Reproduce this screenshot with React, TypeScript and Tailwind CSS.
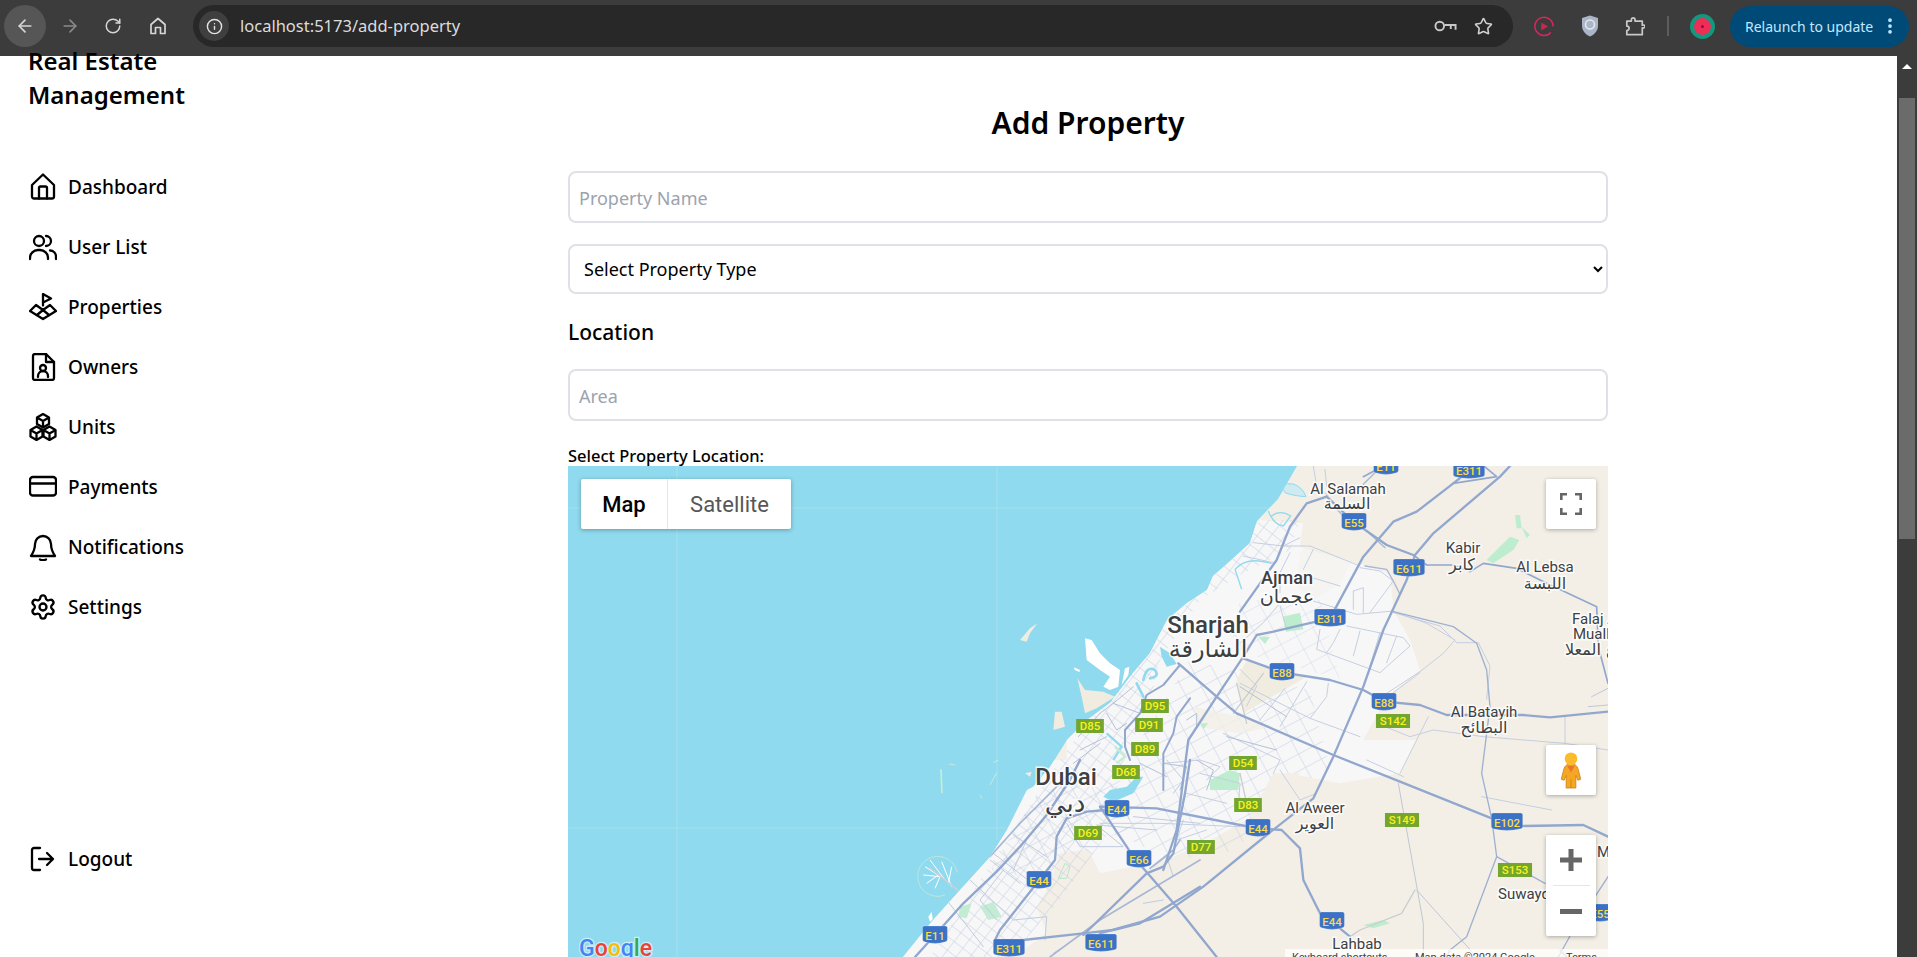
import { ArrowLeft, ArrowRight, RotateCw, Info, Star, Settings, EllipsisVertical } from "lucide-react";

const AR = "font-['DejaVu_Sans',sans-serif]";

function Z({ x, y, children }: { x: number; y: number; children: React.ReactNode }) {
  return <g transform={`translate(${x} ${y}) scale(0.33333)`}>{children}</g>;
}

function Roads({ items, c, w }: { items: string[]; c: string; w: number }) {
  return (
    <g fill="none" stroke={c} strokeWidth={w} strokeLinejoin="round" strokeLinecap="round">
      {items.map((d, i) => (
        <path key={i} d={d} />
      ))}
    </g>
  );
}

function Shield({ x, y, t }: { x: number; y: number; t: string }) {
  const w = t.length * 6.6 + 5;
  return (
    <g>
      <path
        d={`M${x - w / 2} ${y - 7.5} q0 -1.5 2 -1.5 h${w - 4} q2 0 2 1.5 v12 q0 2 -2 2.2 q-${(w - 4) / 2} 3.4 -${w - 4} 0 q-2 -.2 -2 -2.2 z`}
        fill="#3b72c6"
        stroke="#ffffff"
        strokeOpacity={0.35}
        strokeWidth={0.6}
      />
      <text x={x} y={y + 4.5} textAnchor="middle" fontSize={11.5} fontWeight={500} fill="#f8dc4a" className="font-['Roboto',sans-serif]">
        {t}
      </text>
    </g>
  );
}

function Tag({ x, y, t }: { x: number; y: number; t: string }) {
  const w = t.length * 6.4 + 8.5;
  return (
    <g>
      <rect x={x - w / 2} y={y - 7} width={w} height={14} fill="#74a52e" />
      <text x={x} y={y + 4.3} textAnchor="middle" fontSize={11.5} fontWeight={500} fill="#f7f21e" className="font-['Roboto',sans-serif]">
        {t}
      </text>
    </g>
  );
}

function LabelText({ x, y, t, s = 15, w = 400, ar = false, a = "middle" }: { x: number; y: number; t: string; s?: number; w?: number; ar?: boolean; a?: "middle" | "start" }) {
  return (
    <text
      x={x}
      y={y}
      textAnchor={a}
      fontSize={s}
      fontWeight={w}
      fill="#3c4043"
      stroke="#ffffff"
      strokeOpacity={0.8}
      strokeWidth={3}
      className={`[paint-order:stroke] ${ar ? AR : "font-['Roboto',sans-serif]"}`}
    >
      {t}
    </text>
  );
}

const LAND =
  "1297,466 1278,499 1257,521 1250,543 1228,563 1213,576 1207,590 1187,603 1167,620 1150,653 1133,673 1110,703 1087,720 1067,740 1050,767 1033,787 1027,790 1007,830 990,857 960,890 933,920 903,957 1620,957 1620,466";

function MapArt() {
  return (
    <svg viewBox="568 466 1040 491" className="block h-full w-full">
      <defs>
        <clipPath id="land">
          <polygon points={LAND} />
        </clipPath>
        <pattern id="g1" width="11" height="11" patternUnits="userSpaceOnUse" patternTransform="rotate(38)">
          <path d="M0 0H11M0 0V11" stroke="#c3cddf" strokeWidth="1" fill="none" />
        </pattern>
        <pattern id="g2" width="18" height="15" patternUnits="userSpaceOnUse" patternTransform="rotate(-28)">
          <path d="M0 0H18M0 0V15" stroke="#c3cddf" strokeWidth="1" fill="none" />
        </pattern>
      </defs>
      <rect x="568" y="466" width="1040" height="491" fill="#8fdaee" />
      <g stroke="#a6e0ec" strokeWidth="1">
        <path d="M568 508H1300M568 828H1030M677 466V957M997 466V840" />
      </g>
      <polygon points={LAND} fill="#f3efe6" />

      <g clipPath="url(#land)">
        {/* Urban fabric */}
        <Z x={1100} y={440}>
          <polygon
            points="480,240 610,250 600,320 870,400 880,510 930,600 960,690 860,770 790,900 950,900 900,1000 720,1030 560,1000 520,1090 440,1140 330,1200 200,1260 0,1300 -100,1100 -100,700 100,650"
            fill="#f7f7f8"
          />
        </Z>
        <Z x={880} y={760}>
          <polygon points="0,591 160,480 240,390 330,290 440,90 500,0 960,0 960,240 800,330 750,290 680,260 540,280 500,390 470,440 500,520 400,591" fill="#f7f7f8" />
        </Z>
        <polygon points="1260,520 1300,520 1290,550 1240,575 1200,600 1160,660 1150,700 1120,770 1110,830 1060,900 1010,957 930,957 1000,850 1060,760 1120,680 1170,620 1230,560" fill="url(#g1)" />
        <polygon points="1190,660 1310,690 1330,770 1260,800 1240,850 1170,860 1110,830 1140,740" fill="url(#g2)" />
        <polygon points="1240,600 1320,600 1340,680 1290,665 1230,650" fill="url(#g2)" opacity="0.7" />
        <polygon points="1040,790 1130,780 1130,830 1070,850 1040,880 990,870" fill="url(#g2)" />
        {/* beige holes */}
        <Z x={1100} y={440}>
          <polygon points="440,660 620,710 430,820 410,720" fill="#f1ece0" />
          <polygon points="280,800 420,830 520,860 420,880 290,860" fill="#f3efe6" opacity="0.8" />
          <polygon points="600,1000 560,1090 450,1130 520,1000" fill="#f3efe6" />
          <polygon points="640,290 780,320 720,430 640,480 590,440 600,340" fill="#f3efe6" opacity="0.45" />
        </Z>
        {/* Parks */}
        <Z x={1100} y={440}>
          <g fill="#bdeccf">
            <polygon points="548,530 600,518 610,568 558,575" />
            <polygon points="330,1020 390,990 420,1000 415,1050 330,1050" />
            <polygon points="1160,360 1230,290 1258,300 1240,330 1180,370" />
            <polygon points="1245,225 1260,225 1265,265 1250,265" />
            <polygon points="1265,260 1290,285 1280,295" />
            <polygon points="790,1455 850,1440 870,1450 820,1465" />
            <polygon points="475,590 510,590 495,612" />
            <polygon points="300,850 325,850 310,868" />
          </g>
        </Z>
        <Z x={880} y={760}>
          <g fill="#c4ebd3">
            <polygon points="300,440 340,425 365,470 325,480" />
            <polygon points="240,440 275,430 260,475 235,470" />
          </g>
          <path d="M535 355 L555 310 L570 320 L560 355 Z" fill="none" stroke="#b6e6ca" strokeWidth="3" />
        </Z>
        {/* Creeks */}
        <Z x={1000} y={590}>
          <g fill="none" stroke="#8fdaee" strokeWidth="8" strokeLinecap="round">
            <path d="M430 270 Q440 225 465 240 Q480 260 450 265" />
            <path d="M410 280 L430 320" />
          </g>
          <polygon points="480,170 510,190 530,222 500,230 485,200" fill="#8fdaee" />
          <path d="M340 510 L365 470 L320 430" fill="none" stroke="#8fdaee" strokeWidth="7" />
          <path d="M345 470 L375 500 L350 520" fill="none" stroke="#c4ebd3" strokeWidth="7" />
        </Z>
        <Z x={880} y={760}>
          <polygon points="670,110 690,90 740,80 770,50 790,50 760,100 700,125" fill="#8fdaee" />
        </Z>
        <Z x={1200} y={466}>
          <g fill="none" stroke="#8fdaee" strokeWidth="4">
            <path d="M105 310 Q140 270 215 292" />
            <path d="M205 135 Q220 175 250 180 L272 150 Q240 130 215 150" />
            <path d="M105 310 L125 370" />
          </g>
          <path d="M245 60 Q280 40 310 75 L318 92 Q280 90 255 80Z" fill="#cfeaf0" stroke="#8fdaee" strokeWidth="3" />
        </Z>

        {/* Minor roads */}
        <Z x={1200} y={466}>
          <Roads
            c="#c5cfe0"
            w={3}
            items={[
              "M300 215 L250 240 L330 240 L480 300",
              "M160 230 L250 240",
              "M360 490 L350 550 L540 620 L630 540 L610 515 L440 480",
              "M420 490 L400 530 L380 560",
              "M480 495 L460 570",
              "M540 500 L510 600",
              "M590 510 L560 590",
              "M580 440 L720 480 L770 530 L835 530 L870 600 L860 700",
              "M460 375 L490 365 L490 440",
              "M460 375 L460 430",
              "M510 440 L580 345 L540 315 L480 305",
              "M340 405 L470 445 L580 435",
              "M375 10 L380 60",
              "M340 0 L350 60 L385 90",
              "M340 250 L310 310",
              "M270 260 L240 320 L240 380",
              "M320 330 L420 360",
              "M240 420 L260 490",
              "M110 540 L190 470 L250 400",
              "M120 610 L170 660 L140 720",
              "M580 680 L660 620",
              "M130 270 L220 290",
            ]}
          />
          <Roads c="#a8b8d4" w={4} items={["M490 55 L530 15", "M410 130 L430 150", "M500 195 L555 245", "M495 300 L560 310 L580 345 L600 385"]} />
        </Z>
        <Z x={1100} y={440}>
          <Roads
            c="#c5cfe0"
            w={3}
            items={[
              "M880 515 L980 550 L1065 600 L1030 640 L960 695 L860 760",
              "M420 730 L630 835 L780 890",
              "M555 745 L480 840",
              "M620 725 L540 860",
              "M685 730 L680 770 L630 835",
              "M830 850 L930 890 L1000 870 L1150 890 L1395 910 L1524 930",
              "M985 830 L900 1000",
              "M800 960 L910 1010",
              "M540 990 L600 1080 L650 1060",
              "M1145 1070 L1355 1110",
              "M0 1150 L180 1150 L420 1160",
              "M250 1140 L230 1200 L320 1170",
              "M300 1000 L420 1030 L415 1100",
              "M370 880 L540 960 L520 1000",
              "M190 970 L300 960 L360 980 L320 1020",
              "M260 1060 L380 1090",
              "M1395 830 L1395 910",
            ]}
          />
          <Roads c="#bec7d4" w={3} items={["M895 1030 L970 1450 L970 1551", "M950 1350 L1130 1551", "M1475 770 L1524 745", "M1465 800 L1524 795"]} />
          <Roads c="#c9cdd0" w={4} items={["M945 1350 L905 1420 L780 1470 L750 1490", "M410 730 L440 850", "M490 700 L400 820", "M420 1000 L440 1090"]} />
          <Roads c="#9fb1d0" w={4} items={["M1175 1135 L1145 1000 L1160 880 L1170 800 L1160 690 L1130 610 L1060 560 L880 515", "M1175 1135 L1190 1250 L1100 1490 L1050 1530 L1040 1551", "M1190 1250 L1335 1330", "M1380 1530 L1400 1551 M1375 1551 L1420 1470 L1524 1310"]} />
        </Z>
        <Z x={1000} y={590}>
          <Roads
            c="#b4c0d8"
            w={3}
            items={[
              "M340 340 L420 370",
              "M300 370 L340 340 L400 290",
              "M235 440 L300 370",
              "M320 370 L350 420 L380 400",
              "M240 480 L320 440",
              "M220 520 L300 460",
              "M420 520 L500 560",
              "M490 520 L560 530 L540 600",
              "M590 510 L640 540 L620 600",
              "M560 390 L590 370 L590 410",
              "M680 440 L830 480",
              "M720 290 L860 380",
            ]}
          />
        </Z>
        <Z x={880} y={760}>
          <Roads
            c="#c0cbdf"
            w={3}
            items={[
              "M400 225 L500 290",
              "M340 280 L470 380",
              "M330 300 L420 370",
              "M270 360 L400 480 L500 470 L495 540",
              "M200 420 L310 560",
              "M440 240 L400 330",
              "M370 330 L300 420 L350 480",
              "M560 190 L600 260 L730 260 L650 195 L830 210",
              "M860 0 L910 60 L880 100",
              "M760 170 L960 190",
              "M820 320 L860 290 L880 350",
              "M520 580 L610 520",
              "M790 430 L850 420",
            ]}
          />
          <Roads c="#a8b8d4" w={5} items={["M330 290 L420 190 L500 110 L560 50", "M810 325 L880 270 L900 240", "M510 591 L660 480 L960 300"]} />
        </Z>

        {/* Mid & major roads */}
        <Z x={1000} y={590}>
          <Roads c="#92a7cd" w={6} items={["M540 225 L490 285 L440 315 L420 370 L375 420 L375 470 L390 510", "M570 325 L530 380 L520 430 L490 490 L490 600"]} />
        </Z>
        <Z x={880} y={760}>
          <Roads
            c="#92a7cd"
            w={7}
            items={[
              "M105 591 L165 525 L250 430 L350 335 L420 260 L500 165 L570 60 L600 0",
              "M345 540 L360 510 L478 360 L525 300 L530 230 L560 175 L620 155 L680 150",
              "M345 570 L430 540 L610 520 L700 510 L780 490 L960 380",
              "M610 525 L800 340 L850 320 L880 280 L915 100 L930 0",
            ]}
          />
        </Z>
        <Z x={1100} y={440}>
          <Roads
            c="#92a7cd"
            w={7}
            items={[
              "M235 670 L350 770 L410 820 L700 945 L900 1025 L1175 1135 L1265 1158 L1450 1155 L1524 1190",
              "M190 1290 L230 1170 L265 900 L350 770 L430 650 L470 585 L520 575 L690 535 L790 350 L880 245 L950 215 L1060 130 L1110 90",
              "M0 1480 L180 1430 L310 1340 L500 1185 L640 1075 L700 950 L790 740 L850 570 L920 420 L945 345 L1000 280 L1200 110 L1230 78",
              "M430 655 L545 697 L690 720 L790 750 L855 785 L960 795 L1040 825 L1270 825 L1350 832 L1524 815",
              "M0 1100 L170 1105 L420 1155 L475 1165 L545 1170 L600 1225 L610 1320 L660 1420 L695 1445 L750 1490",
              "M420 515 L530 360 L570 260 L620 190 L680 170",
              "M680 170 L760 245 L860 315 L940 345",
              "M0 1100 L100 1250 L230 1400 L350 1551",
            ]}
          />
          <Roads c="#92a7cd" w={5} items={["M940 345 L980 375 L1060 375 L1110 395 L1150 370 L1250 385 L1340 430 L1490 500 L1495 620 L1524 730", "M1060 130 L1190 110 L1130 60", "M790 110 L850 78"]} />
        </Z>
      </g>

      {/* Islands */}
      <Z x={1000} y={590}>
        <polygon points="60,150 90,115 112,100 90,130 80,155" fill="#f1ece0" />
        <polygon points="255,145 275,150 300,190 330,220 360,240 355,290 330,300 310,290 330,260 300,240 260,210" fill="#ffffff" />
        <polygon points="365,285 375,235 388,230 385,255" fill="#ffffff" />
        <polygon points="222,232 240,240 238,246 224,240" fill="#ffffff" />
        <polygon points="232,265 255,300 310,305 345,320 290,355 255,370 245,320" fill="#f1ece0" />
        <polygon points="165,365 185,365 195,410 160,420" fill="#f1ece0" />
      </Z>
      <Z x={880} y={760}>
        <g fill="none" stroke="#c8ecd8" strokeWidth="3">
          <path d="M183 28 L186 100" strokeWidth="5" />
          <path d="M350 38 L330 75" />
          <path d="M340 8 L355 0" />
          <path d="M208 12 L225 15" />
          <path d="M300 105 L305 115" />
        </g>
        <polygon points="145,470 155,455 158,478 150,485" fill="#ffffff" />
        <polygon points="435,40 455,35 450,50" fill="#f1ece0" />
        {/* Palm */}
        <path d="M232 338 A60 60 0 1 0 195 405" fill="none" stroke="#bfe6d6" strokeWidth="3" />
        <g stroke="#ffffff" strokeWidth="3">
          <path d="M215 380 L185 305M205 370 L215 320M195 360 L150 300M190 355 L135 320M180 350 L130 345M175 345 L140 370M180 350 L165 385" />
        </g>
        <path d="M148 322 L235 392" stroke="#c9cfdc" strokeWidth="5" />
      </Z>

      {/* Labels */}
      <LabelText x={1208} y={633} t="Sharjah" s={24} w={500} />
      <LabelText x={1208} y={657} t="الشارقة" s={24} ar />
      <LabelText x={1066} y={785} t="Dubai" s={24} w={500} />
      <LabelText x={1065} y={812} t="دبي" s={26} ar />
      <LabelText x={1287} y={584} t="Ajman" s={18} w={500} />
      <LabelText x={1287} y={603} t="عجمان" s={19} ar />
      <LabelText x={1348} y={494} t="Al Salamah" s={15} />
      <LabelText x={1347} y={509} t="السلمة" s={16} ar />
      <LabelText x={1463} y={553} t="Kabir" s={15} />
      <LabelText x={1462} y={570} t="كابر" s={16} ar />
      <LabelText x={1545} y={572} t="Al Lebsa" s={15} />
      <LabelText x={1545} y={589} t="اللبسة" s={16} ar />
      <LabelText x={1572} y={624} t="Falaj A" s={15} a="start" />
      <LabelText x={1573} y={639} t="Muall" s={15} a="start" />
      <LabelText x={1565} y={655} t="ع المعلا" s={16} ar a="start" />
      <LabelText x={1484} y={717} t="Al Batayih" s={15} />
      <LabelText x={1484} y={733} t="البطائح" s={16} ar />
      <LabelText x={1315} y={813} t="Al Aweer" s={15} />
      <LabelText x={1315} y={829} t="العوير" s={16} ar />
      <LabelText x={1498} y={899} t="Suwayd" s={15} a="start" />
      <LabelText x={1597} y={857} t="M" s={15} a="start" />
      <LabelText x={1357} y={949} t="Lahbab" s={15} />

      {[
        [1386, 466, "E11"],
        [1469, 470, "E311"],
        [1354, 522, "E55"],
        [1409, 568, "E611"],
        [1330, 618, "E311"],
        [1282, 672, "E88"],
        [1384, 702, "E88"],
        [1117, 809, "E44"],
        [1258, 828, "E44"],
        [1139, 859, "E66"],
        [1507, 822, "E102"],
        [1332, 921, "E44"],
        [1600, 913, "E55"],
        [1039, 880, "E44"],
        [935, 935, "E11"],
        [1009, 948, "E311"],
        [1101, 943, "E611"],
      ].map(([x, y, t]) => (
        <Shield key={`${x}${y}`} x={x as number} y={y as number} t={t as string} />
      ))}
      {[
        [1155, 706, "D95"],
        [1149, 725, "D91"],
        [1145, 749, "D89"],
        [1126, 772, "D68"],
        [1243, 763, "D54"],
        [1248, 805, "D83"],
        [1201, 847, "D77"],
        [1090, 726, "D85"],
        [1088, 833, "D69"],
        [1393, 721, "S142"],
        [1402, 820, "S149"],
        [1515, 870, "S153"],
      ].map(([x, y, t]) => (
        <Tag key={t as string} x={x as number} y={y as number} t={t as string} />
      ))}

      {/* Google */}
      <text x={579} y={956} fontSize={23} fontWeight={500} stroke="#ffffff" strokeOpacity={0.55} strokeWidth={2.5} className="[paint-order:stroke] font-['Roboto',sans-serif]">
        <tspan fill="#4285f4">G</tspan>
        <tspan fill="#ea4335">o</tspan>
        <tspan fill="#fbbc05">o</tspan>
        <tspan fill="#4285f4">g</tspan>
        <tspan fill="#34a853">l</tspan>
        <tspan fill="#ea4335">e</tspan>
      </text>

      {/* Attribution */}
      <rect x={1285} y={949} width={323} height={8} fill="#ffffff" opacity={0.72} />
      <text y={961} fontSize={11} fill="#3c4043" className="font-['Roboto',sans-serif]">
        <tspan x={1292}>Keyboard shortcuts</tspan>
        <tspan x={1415}>Map data ©2024 Google</tspan>
        <tspan x={1566}>Terms</tspan>
      </text>
    </svg>
  );
}

const Ico = ({ children }: { children: React.ReactNode }) => (
  <svg viewBox="0 0 28 28" className="h-[28px] w-[28px] shrink-0" fill="none" stroke="#000" strokeWidth={2.3} strokeLinecap="round" strokeLinejoin="round">
    {children}
  </svg>
);

const cube = "M14 1.5 L20 5 V11.5 L14 15 L8 11.5 V5 Z M8 5 L14 8.5 L20 5 M14 8.5 V15";

const NAV: [string, React.ReactNode][] = [
  [
    "Dashboard",
    <Ico key="a">
      <path d="M3 12 L14 1.5 L25 12 V23.5 a2 2 0 0 1-2 2 H5 a2 2 0 0 1-2-2Z" />
      <path d="M10 25.5 V15 a1.5 1.5 0 0 1 1.5-1.5 h5 a1.5 1.5 0 0 1 1.5 1.5 V25.5" />
    </Ico>,
  ],
  [
    "User List",
    <Ico key="b">
      <circle cx="10" cy="8" r="5" />
      <path d="M1 26 v-1 a8 8 0 0 1 8-8 h2 a8 8 0 0 1 8 8 v1" />
      <path d="M17 3 a5 5 0 0 1 0 10" />
      <path d="M21 17.5 a6 6 0 0 1 6 6 v2.5" />
    </Ico>,
  ],
  [
    "Properties",
    <Ico key="c">
      <path d="M14 12.5 V1 L22 5.5 L14 9.5" />
      <path d="M7 12 L1 18 L14 26 L27 18 L21 12 L14 17 Z" />
      <path d="M14 17 L8 22 M14 17 L20 22" />
    </Ico>,
  ],
  [
    "Owners",
    <Ico key="d">
      <path d="M4 3 a2 2 0 0 1 2-2 H17 L25 9 V25 a2 2 0 0 1-2 2 H6 a2 2 0 0 1-2-2Z" />
      <path d="M17 1 V9 H25" />
      <circle cx="14" cy="15" r="3" />
      <path d="M9 24 v-1 a5 5 0 0 1 10 0 v1" />
    </Ico>,
  ],
  [
    "Units",
    <Ico key="e">
      <path d="M14 1 L20 4.5 V11 L14 14.5 L8 11 V4.5 Z M8 4.5 L14 8 L20 4.5 M14 8 V14.5" />
      <g transform="translate(-6.5 12)">
        <path d={cube} />
      </g>
      <g transform="translate(6.5 12)">
        <path d={cube} />
      </g>
    </Ico>,
  ],
  [
    "Payments",
    <Ico key="f">
      <rect x="1" y="4" width="26" height="18.5" rx="3" />
      <path d="M1 10.5 H27" />
    </Ico>,
  ],
  [
    "Notifications",
    <Ico key="g">
      <path d="M6 11 a8 8 0 0 1 16 0 c0 6 2 9 4 12 H2 c2-3 4-6 4-12Z" />
      <path d="M11 26.5 q3 1.5 6 0" />
    </Ico>,
  ],
  ["Settings", <Settings key="h" size={28} strokeWidth={2} color="#000" className="shrink-0" />],
];

function Row({ label, icon }: { label: string; icon: React.ReactNode }) {
  return (
    <div className="flex h-[60px] items-center gap-[11px] pl-[29px] text-[19px] font-medium text-black">
      {icon}
      <span>{label}</span>
    </div>
  );
}

function Toolbar() {
  return (
    <div className="flex h-[56px] shrink-0 items-center bg-[#3c3c3c] pb-[4px] pl-[4px] pr-[7px]">
      <div className="flex h-[42px] w-[42px] items-center justify-center rounded-full bg-[#565656]">
        <ArrowLeft size={20} color="#d6d6d6" strokeWidth={2} />
      </div>
      <div className="flex w-[48px] justify-center">
        <ArrowRight size={20} color="#8a8a8a" strokeWidth={2} />
      </div>
      <div className="flex w-[38px] justify-center">
        <RotateCw size={18} color="#d6d6d6" strokeWidth={2} />
      </div>
      <div className="flex w-[52px] justify-center">
        <svg viewBox="0 0 20 20" className="h-[20px] w-[20px]" fill="none" stroke="#d6d6d6" strokeWidth="1.7" strokeLinejoin="round">
          <path d="M3 8.5 L10 2.5 L17 8.5 V17.5 H12.5 V11.5 H7.5 V17.5 H3 Z" />
        </svg>
      </div>
      <div className="ml-[9px] flex h-[42px] w-[1320px] items-center rounded-full bg-[#282828] pl-[6px] pr-[20px]">
        <div className="flex h-[30px] w-[30px] items-center justify-center rounded-full bg-[#3f3f3f]">
          <Info size={17} color="#e3e3e3" strokeWidth={2} />
        </div>
        <span className="ml-[11px] font-['Noto_Sans',sans-serif] text-[16.5px] text-[#dcdcdc]">localhost:5173/add-property</span>
        <div className="ml-auto flex items-center gap-[17px]">
          <svg viewBox="0 0 24 14" className="h-[14px] w-[23px]" fill="none" stroke="#c8c8c8" strokeWidth="2">
            <circle cx="6" cy="7" r="4.5" />
            <path d="M11 6 H22.5 V11 M17.5 6 V10" />
          </svg>
          <Star size={19} color="#d0d0d0" strokeWidth={2} />
        </div>
      </div>
      <div className="ml-[21px] flex w-[20px] justify-center">
        <svg viewBox="0 0 22 22" className="h-[21px] w-[21px]" fill="none">
          <path d="M18.5 17.5 A10 10 0 1 1 21 11" stroke="#e0245e" strokeWidth="1.6" />
          <path d="M8 6.5 L15.5 11 L8 15.5 Z" fill="#c9274f" />
        </svg>
      </div>
      <div className="ml-[26px] flex w-[20px] justify-center">
        <svg viewBox="0 0 18 22" className="h-[22px] w-[18px]">
          <path d="M9 0.5 L17 3 V11 C17 16 13 20 9 21.5 C5 20 1 16 1 11 V3 Z" fill="#aab5c8" />
          <circle cx="9" cy="9.5" r="4.5" fill="none" stroke="#e4e8ee" strokeWidth="1.6" />
        </svg>
      </div>
      <div className="ml-[25px] flex w-[20px] justify-center">
        <svg viewBox="0 0 22 22" className="h-[21px] w-[21px]" fill="none" stroke="#c8c8c8" strokeWidth="1.9" strokeLinejoin="round">
          <path d="M2 5 H7 V3.5 a2 2 0 0 1 4 0 V5 H19 V9.5 H20.5 a1.5 1.5 0 0 1 0 3 H19 V20 H2 V15.5 a2.5 2.5 0 0 0 0-5 Z" />
        </svg>
      </div>
      <div className="ml-[22px] h-[20px] w-[2px] bg-[#5d5d5d]" />
      <div className="ml-[21px] flex h-[25px] w-[25px] items-center justify-center rounded-full bg-[#0f9a80]">
        <div className="flex h-[17px] w-[17px] items-center justify-center rounded-full bg-[#f02d57]">
          <div className="h-[3px] w-[3px] rounded-full bg-[#7a1b30]" />
        </div>
      </div>
      <div className="ml-[15px] flex h-[41px] w-[179px] items-center justify-between rounded-full bg-[#004a77] pl-[15px] pr-[9px]">
        <span className="font-['Noto_Sans',sans-serif] text-[14px] text-[#c2e7ff]">Relaunch to update</span>
        <EllipsisVertical size={20} color="#c2e7ff" strokeWidth={2.5} />
      </div>
    </div>
  );
}

function Scrollbar() {
  return (
    <div className="flex w-[20px] shrink-0 flex-col items-center bg-[#3c3c3c]">
      <div className="mt-[8px] h-0 w-0 border-x-[5px] border-b-[5px] border-x-transparent border-b-white" />
      <div className="mt-[29px] h-[441px] w-[16px] bg-[#6b6b6b]" />
    </div>
  );
}

export default function App() {
  return (
    <div className="flex h-screen w-full flex-col overflow-hidden bg-white font-['Noto_Sans',sans-serif] text-black">
      <Toolbar />
      <div className="flex min-h-0 flex-1">
        <aside className="flex w-[279px] shrink-0 flex-col pb-[68px]">
          <h2 className="mt-[-12px] w-[220px] pl-[28px] text-[24px] font-semibold leading-[34px]">Real Estate Management</h2>
          <nav className="mt-[45px]">
            {NAV.map(([label, icon]) => (
              <Row key={label} label={label} icon={icon} />
            ))}
          </nav>
          <div className="mt-auto">
            <Row
              label="Logout"
              icon={
                <Ico>
                  <path d="M11 3 H5 a2 2 0 0 0-2 2 v18 a2 2 0 0 0 2 2 h6" />
                  <path d="M18 8 l6 6-6 6 M24 14 H10" />
                </Ico>
              }
            />
          </div>
        </aside>
        <main className="min-w-0 flex-1">
          <div className="mx-auto w-[1040px] pt-[49px]">
            <h1 className="text-center text-[30px] font-semibold leading-[36px]">Add Property</h1>
            <input
              placeholder="Property Name"
              className="mt-[30px] block h-[52px] w-full rounded-lg border-2 border-[#e0e1e6] px-[9px] pt-[2px] text-[18px] outline-none placeholder:text-[#9ca3af]"
            />
            <select defaultValue="" className="mt-[21px] block h-[50px] w-full rounded-lg border-2 border-[#e0e1e6] bg-white px-[10px] text-[18px] outline-none">
              <option value="">Select Property Type</option>
            </select>
            <h3 className="mt-[24px] text-[21px] font-medium leading-[28px]">Location</h3>
            <input
              placeholder="Area"
              className="mt-[23px] block h-[52px] w-full rounded-lg border-2 border-[#e0e1e6] px-[9px] pt-[2px] text-[18px] outline-none placeholder:text-[#9ca3af]"
            />
            <label className="mt-[24px] block text-[16.5px] font-medium leading-[21px]">Select Property Location:</label>
            <div className="relative h-[491px] w-full overflow-hidden bg-[#8fdaee]">
              <MapArt />
              <div className="absolute left-[13px] top-[13px] flex h-[50px] overflow-hidden rounded-[2px] bg-white font-['Roboto',sans-serif] text-[22px] shadow-[0_1px_4px_rgba(0,0,0,0.3)]">
                <div className="flex w-[87px] items-center justify-center border-r border-[#e6e6e6] font-medium text-black">Map</div>
                <div className="flex w-[123px] items-center justify-center text-[#565656]">Satellite</div>
              </div>
              <div className="absolute right-[12px] top-[13px] flex h-[50px] w-[50px] items-center justify-center rounded-[2px] bg-white shadow-[0_1px_4px_rgba(0,0,0,0.3)]">
                <svg viewBox="0 0 22 22" className="h-[22px] w-[22px]" fill="none" stroke="#666" strokeWidth="2.6">
                  <path d="M1.3 7 V1.3 H7 M15 1.3 H20.7 V7 M1.3 15 V20.7 H7 M20.7 15 V20.7 H15" />
                </svg>
              </div>
              <div className="absolute right-[12px] top-[279px] flex h-[50px] w-[50px] items-center justify-center rounded-[2px] bg-white shadow-[0_1px_4px_rgba(0,0,0,0.3)]">
                <svg viewBox="0 0 22 38" className="h-[37px] w-[22px]">
                  <path d="M11 12 C6 12 4 15 3 20 L1 28 L4 29 L6 24 V37 H16 V24 L18 29 L21 28 L19 20 C18 15 16 12 11 12Z" fill="#f5a623" stroke="#c77f12" strokeWidth="0.8" />
                  <circle cx="11" cy="7" r="6.5" fill="#fbbc2c" />
                  <path d="M7 14 L11 21 L15 14 Z" fill="#e8772e" />
                  <path d="M11 28 V37" stroke="#c77f12" strokeWidth="0.8" />
                </svg>
              </div>
              <div className="absolute right-[12px] top-[369px] flex h-[101px] w-[50px] flex-col items-center rounded-[2px] bg-white shadow-[0_1px_4px_rgba(0,0,0,0.3)]">
                <div className="flex h-[50px] w-full items-center justify-center">
                  <svg viewBox="0 0 22 22" className="h-[22px] w-[22px]">
                    <path d="M8.5 0 H13.5 V8.5 H22 V13.5 H13.5 V22 H8.5 V13.5 H0 V8.5 H8.5 Z" fill="#666" />
                  </svg>
                </div>
                <div className="h-px w-[37px] bg-[#e6e6e6]" />
                <div className="flex h-[50px] w-full items-center justify-center">
                  <div className="h-[5px] w-[22px] bg-[#666]" />
                </div>
              </div>
            </div>
          </div>
        </main>
        <Scrollbar />
      </div>
    </div>
  );
}
